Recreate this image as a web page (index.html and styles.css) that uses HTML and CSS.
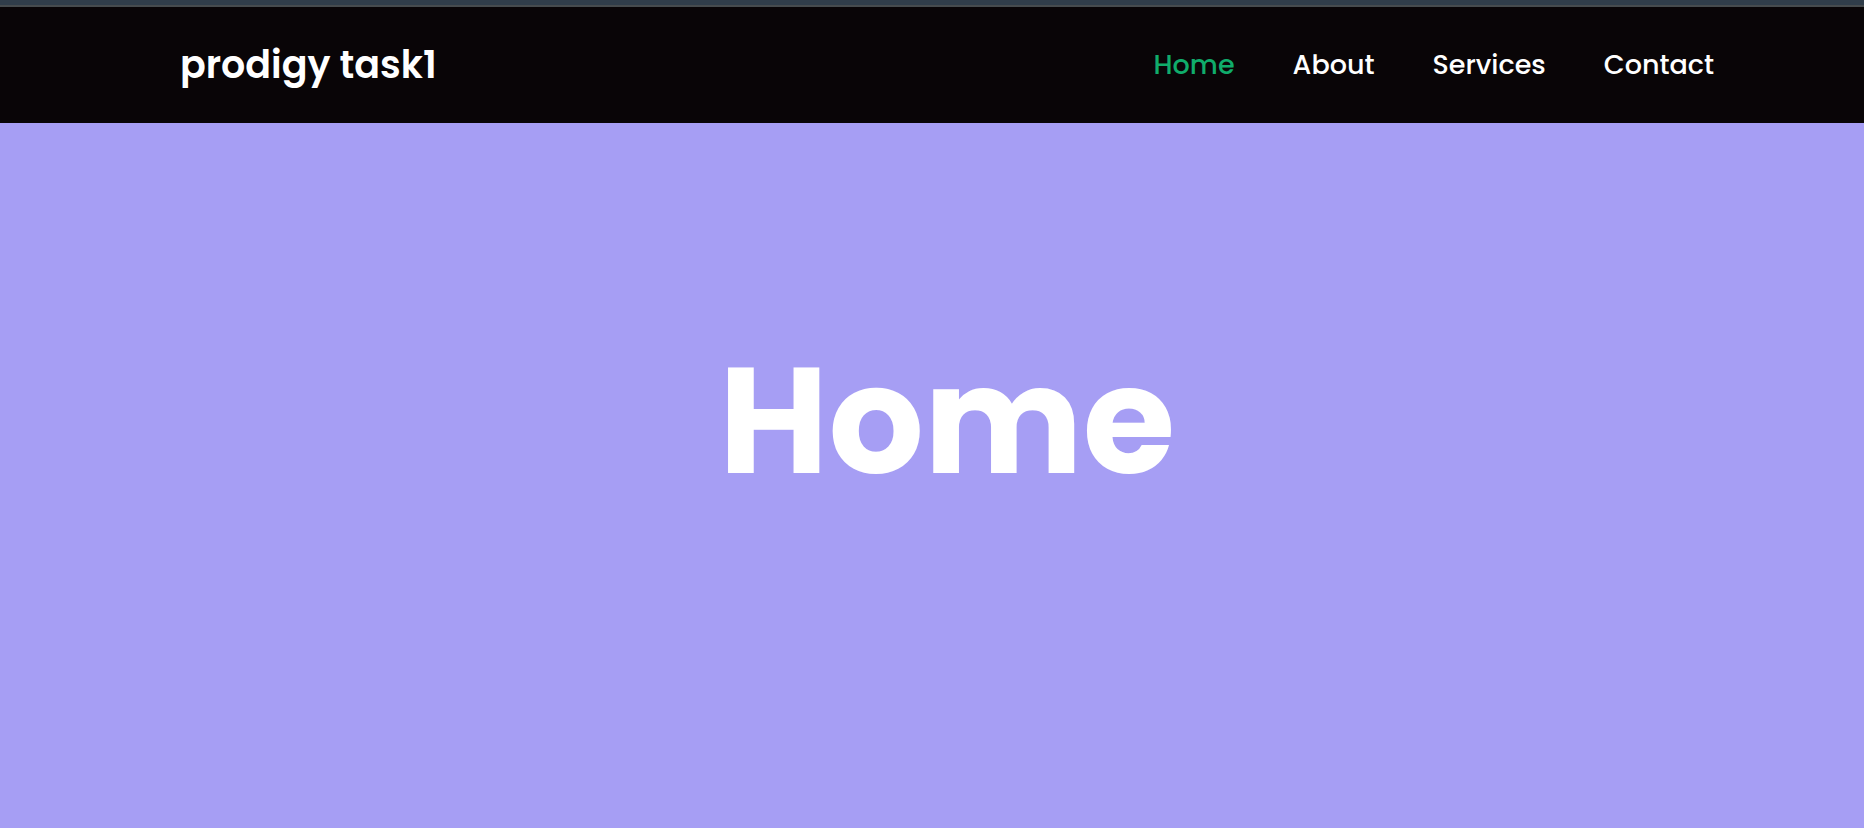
FILE: index.html
```html
<!DOCTYPE html>
<html lang="en">
<head>
<meta charset="utf-8">
<meta name="viewport" content="width=device-width, initial-scale=1">
<title>prodigy task1</title>
<link rel="stylesheet" href="styles.css">
</head>
<body>
<div class="strip"></div>
<header class="header">
  <a class="logo" href="#home">prodigy task1</a>
  <nav class="nav" aria-label="Main">
    <a class="nav-link active" href="#home">Home</a>
    <a class="nav-link" href="#about">About</a>
    <a class="nav-link" href="#services">Services</a>
    <a class="nav-link" href="#contact">Contact</a>
  </nav>
</header>
<main class="hero" id="home">
  <h1 class="hero-title">Home</h1>
</main>
</body>
</html>
```
FILE: styles.css
```css
* {
  box-sizing: border-box;
  margin: 0;
}

body {
  display: flex;
  flex-direction: column;
  min-height: 100vh;
  background: #a69ef4;
  color: #fff;
  font-family: Poppins, Inter, "Open Sans", sans-serif;
}

.strip {
  height: 7px;
  background: #303d4a;
  border-bottom: 2px solid #464b4e;
}

.header {
  display: flex;
  align-items: center;
  justify-content: space-between;
  padding: 32px 150px 32px 180px;
  background: #090507;
}

.logo {
  color: #fff;
  font-size: 38px;
  font-weight: 600;
  line-height: 52px;
  text-decoration: none;
}

.nav {
  display: flex;
  gap: 58px;
}

.nav-link {
  color: #fff;
  font-size: 27px;
  font-weight: 500;
  line-height: 52px;
  text-decoration: none;
}

.nav-link.active {
  color: #10ac6b;
}

.hero {
  flex: 1;
  padding: 208px 0 0 30px;
  text-align: center;
}

.hero-title {
  font-size: 150px;
  font-weight: 700;
  line-height: 180px;
}
```
